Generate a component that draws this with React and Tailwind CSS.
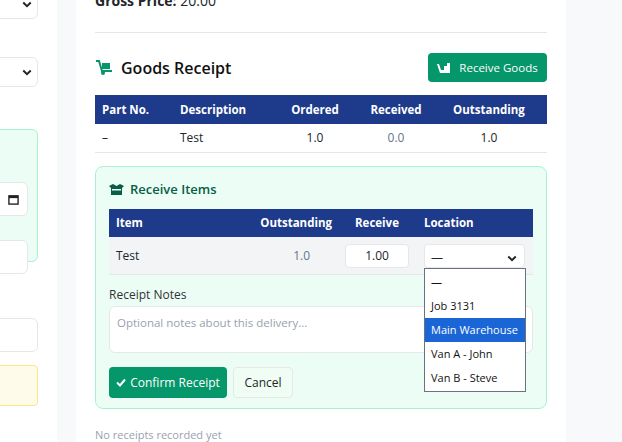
import React from "react";

const Chev = () => (
  <svg width="12" height="12" viewBox="0 0 16 16"><path d="M3 6l5 5 5-5" fill="none" stroke="#222" strokeWidth="2.5" /></svg>
);

export default function App() {
  const f = { fontFamily: "'Open Sans', 'Noto Sans', sans-serif" };
  return (
    <div className="w-[622px] h-[442px] overflow-hidden bg-[#f8f9fa] relative flex text-[#212529]" style={f}>
      <div className="w-[57px] bg-white shrink-0 relative">
        <div className="absolute left-[-20px] top-[-12px] w-[58px] h-[31px] border border-gray-200 rounded-md bg-white flex items-center justify-end pr-1"><Chev /></div>
        <div className="absolute left-[-20px] top-[57px] w-[58px] h-[30px] border border-gray-200 rounded-md bg-white flex items-center justify-end pr-1"><Chev /></div>
        <div className="absolute left-[-20px] top-[129px] w-[58px] h-[133px] border border-[#a7f3d0] rounded-md bg-[#ecfdf5]">
          <div className="absolute left-0 top-[52px] w-[47px] h-[34px] border border-gray-200 rounded-md bg-white flex items-center justify-end pr-2">
            <svg width="11" height="11" viewBox="0 0 12 12"><rect x="1" y="2" width="10" height="9" fill="none" stroke="#222" strokeWidth="1.5"/><rect x="1" y="2" width="10" height="2.5" fill="#222"/></svg>
          </div>
          <div className="absolute left-0 top-[110px] w-[47px] h-[34px] border border-gray-200 rounded-md bg-white" />
        </div>
        <div className="absolute left-[-20px] top-[318px] w-[58px] h-[34px] border border-gray-200 rounded-md bg-white" />
        <div className="absolute left-[-20px] top-[365px] w-[58px] h-[41px] border border-[#fde68a] rounded-sm bg-[#fffbeb]" />
      </div>
      <div className="w-[19px] shrink-0" />
      <div className="w-[490px] shrink-0 bg-white px-[19px] relative text-[13px]">
        <div className="absolute top-[-10px] left-[19px] text-[14px]"><b>Gross Price:</b> 20.00</div>
        <div className="h-[33px] border-b border-gray-200" />
        <div className="flex items-center justify-between mt-[20px] h-[29px]">
          <div className="flex items-center gap-2 text-[16px] font-semibold text-[#111]">
            <svg width="18" height="16" viewBox="0 0 18 16"><path d="M1 1h3l3 10h10" fill="none" stroke="#059669" strokeWidth="2"/><rect x="7" y="3" width="8" height="6" fill="#059669"/><circle cx="8" cy="13" r="2" fill="#059669"/></svg>
            Goods Receipt
          </div>
          <button className="h-[29px] w-[119px] bg-[#059669] text-white rounded text-[11.5px] flex items-center justify-center gap-2">
            <svg width="14" height="12" viewBox="0 0 14 12"><path d="M0 2h2l2 6h3V4h3V1h3v10H3z" fill="white"/></svg>
            Receive Goods
          </button>
        </div>
        <div className="mt-[13px]">
          <div className="h-[29px] bg-[#1e3a8a] text-white font-bold text-[11.5px] grid grid-cols-[79px_95px_92px_70px_116px] items-center">
            <span className="pl-[7px]">Part No.</span><span className="pl-[6px]">Description</span><span className="text-center">Ordered</span><span className="text-center">Received</span><span className="text-center">Outstanding</span>
          </div>
          <div className="h-[29px] border-b border-gray-200 text-[12px] grid grid-cols-[79px_95px_92px_70px_116px] items-center">
            <span className="pl-[7px]">–</span><span className="pl-[6px]">Test</span><span className="text-center">1.0</span><span className="text-center text-[#64748b]">0.0</span><span className="text-center">1.0</span>
          </div>
        </div>
        <div className="mt-[13px] h-[243px] bg-[#ecfdf5] border border-[#a7f3d0] rounded-lg px-[13px] pt-[14px]">
          <div className="flex items-center gap-[6px] text-[13px] text-[#065f46] font-semibold h-[18px]">
            <svg width="15" height="12" viewBox="0 0 15 12"><path d="M0 2l4-2 3.5 2L11 0l4 2-2 2v7H2V4z" fill="#065f46"/><rect x="3" y="5" width="9" height="1.5" fill="#ecfdf5"/></svg>
            Receive Items
          </div>
          <div className="mt-[10px] h-[28px] bg-[#1e3a8a] text-white font-bold text-[11.5px] grid grid-cols-[128px_97px_86px_113px] items-center">
            <span className="pl-[7px]">Item</span><span className="text-right pr-[2px]">Outstanding</span><span className="text-center">Receive</span><span className="pl-[4px]">Location</span>
          </div>
          <div className="h-[38px] bg-[#f3f4f6] border-b border-gray-200 text-[12px] grid grid-cols-[128px_97px_86px_113px] items-center">
            <span className="pl-[7px]">Test</span><span className="text-right pr-[24px] text-[#64748b]">1.0</span>
            <span className="flex justify-center"><span className="w-[64px] h-[24px] bg-white border border-gray-200 rounded flex items-center justify-center">1.00</span></span>
            <span className="pl-[4px]"><span className="w-[101px] h-[24px] bg-white border border-gray-200 rounded flex items-center justify-between px-[6px] pt-1">—<Chev /></span></span>
          </div>
          <div className="mt-[11px] text-[12px] text-[#333]">Receipt Notes</div>
          <div className="mt-[2px] h-[47px] bg-white border border-gray-200 rounded-md px-[7px] py-[7px] text-[11.5px] text-gray-400">Optional notes about this delivery...</div>
          <div className="mt-[14px] flex gap-[6px]">
            <button className="h-[31px] w-[118px] bg-[#059669] text-white rounded text-[12px] flex items-center justify-center gap-1">
              <svg width="10" height="9" viewBox="0 0 10 9"><path d="M1 4.5l3 3 5-6" fill="none" stroke="white" strokeWidth="2"/></svg>
              Confirm Receipt
            </button>
            <button className="h-[31px] w-[60px] bg-[#f0fdf4] border border-gray-200 rounded text-[12px]">Cancel</button>
          </div>
        </div>
        <div className="mt-[18px] text-[11px] text-gray-400">No receipts recorded yet</div>
      </div>
      <div className="absolute left-[424px] top-[268px] w-[102px] bg-white border border-gray-500 text-[11px] text-[#111] py-[1px]">
        <div className="h-[24px] flex items-center px-[6px]">—</div>
        <div className="h-[24px] flex items-center px-[6px]">Job 3131</div>
        <div className="h-[24px] flex items-center px-[6px] bg-[#1a66d6] text-white">Main Warehouse</div>
        <div className="h-[24px] flex items-center px-[6px]">Van A - John</div>
        <div className="h-[24px] flex items-center px-[6px]">Van B - Steve</div>
      </div>
    </div>
  );
}
